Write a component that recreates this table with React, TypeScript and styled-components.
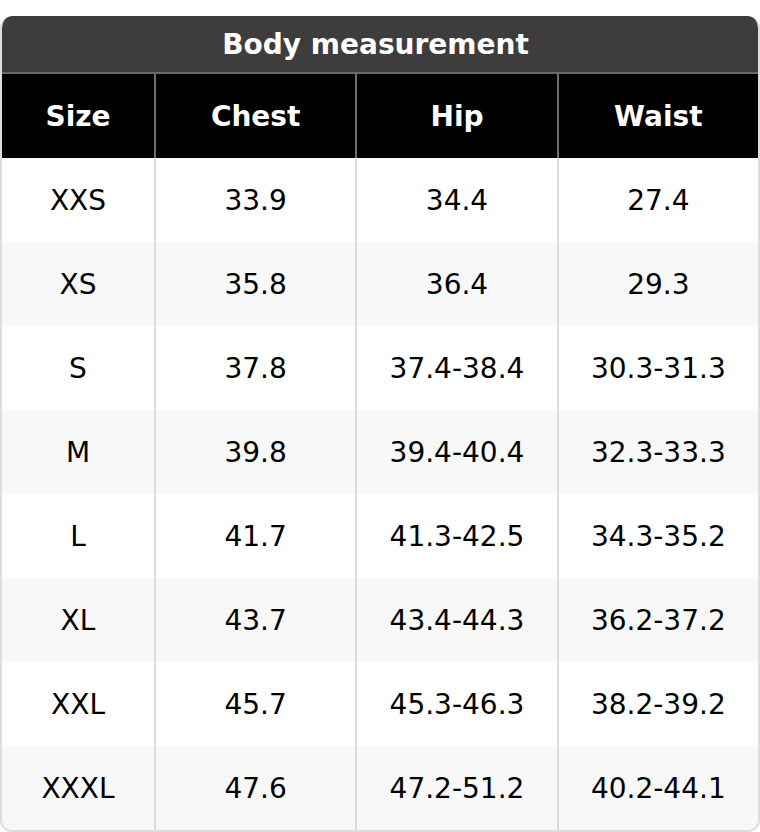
import styled, { createGlobalStyle } from "styled-components"

const GlobalStyle = createGlobalStyle`
  html, body {
    margin: 0;
    padding: 0;
    background: #ffffff;
  }

  body {
    font-family: "DejaVu Sans", "Liberation Sans", sans-serif;
  }
`

const Wrap = styled.div`
  width: 760px;
  padding-top: 16px;
`

const Card = styled.div`
  border: 2px solid #dddddd;
  border-top: none;
  border-radius: 12px;
  overflow: hidden;
`

const Title = styled.div`
  height: 56px;
  display: flex;
  align-items: center;
  justify-content: center;
  margin: 0 -2px;
  padding-right: 9px;
  background: #3d3d3d;
  border-bottom: 2px solid #6a6a6a;
  color: #ffffff;
  font-size: 28px;
  font-weight: 700;
  border-radius: 12px 12px 0 0;
`

const Row = styled.div<{ $head?: boolean; $alt?: boolean }>`
  display: grid;
  grid-template-columns: 152px 1fr 1fr 1fr;
  height: 84px;
  background: ${(p) => (p.$head ? "#000000" : p.$alt ? "#f8f8f8" : "#ffffff")};
  color: ${(p) => (p.$head ? "#ffffff" : "#000000")};
  font-size: 28px;
  font-weight: ${(p) => (p.$head ? 700 : 400)};
`

const Cell = styled.div<{ $head?: boolean }>`
  display: flex;
  align-items: center;
  justify-content: center;
  border-left: 2px solid ${(p) => (p.$head ? "#6f6f6f" : "#dddddd")};

  &:first-child {
    border-left: none;
  }
`

const heads = ["Size", "Chest", "Hip", "Waist"]

const rows = [
  ["XXS", "33.9", "34.4", "27.4"],
  ["XS", "35.8", "36.4", "29.3"],
  ["S", "37.8", "37.4-38.4", "30.3-31.3"],
  ["M", "39.8", "39.4-40.4", "32.3-33.3"],
  ["L", "41.7", "41.3-42.5", "34.3-35.2"],
  ["XL", "43.7", "43.4-44.3", "36.2-37.2"],
  ["XXL", "45.7", "45.3-46.3", "38.2-39.2"],
  ["XXXL", "47.6", "47.2-51.2", "40.2-44.1"],
]

export default function App() {
  return (
    <Wrap>
      <GlobalStyle />
      <Card>
        <Title>Body measurement</Title>
        <Row $head>
          {heads.map((h) => (
            <Cell $head key={h}>
              {h}
            </Cell>
          ))}
        </Row>
        {rows.map((r, i) => (
          <Row key={r[0]} $alt={i % 2 === 1}>
            {r.map((c, j) => (
              <Cell key={j}>{c}</Cell>
            ))}
          </Row>
        ))}
      </Card>
    </Wrap>
  )
}
